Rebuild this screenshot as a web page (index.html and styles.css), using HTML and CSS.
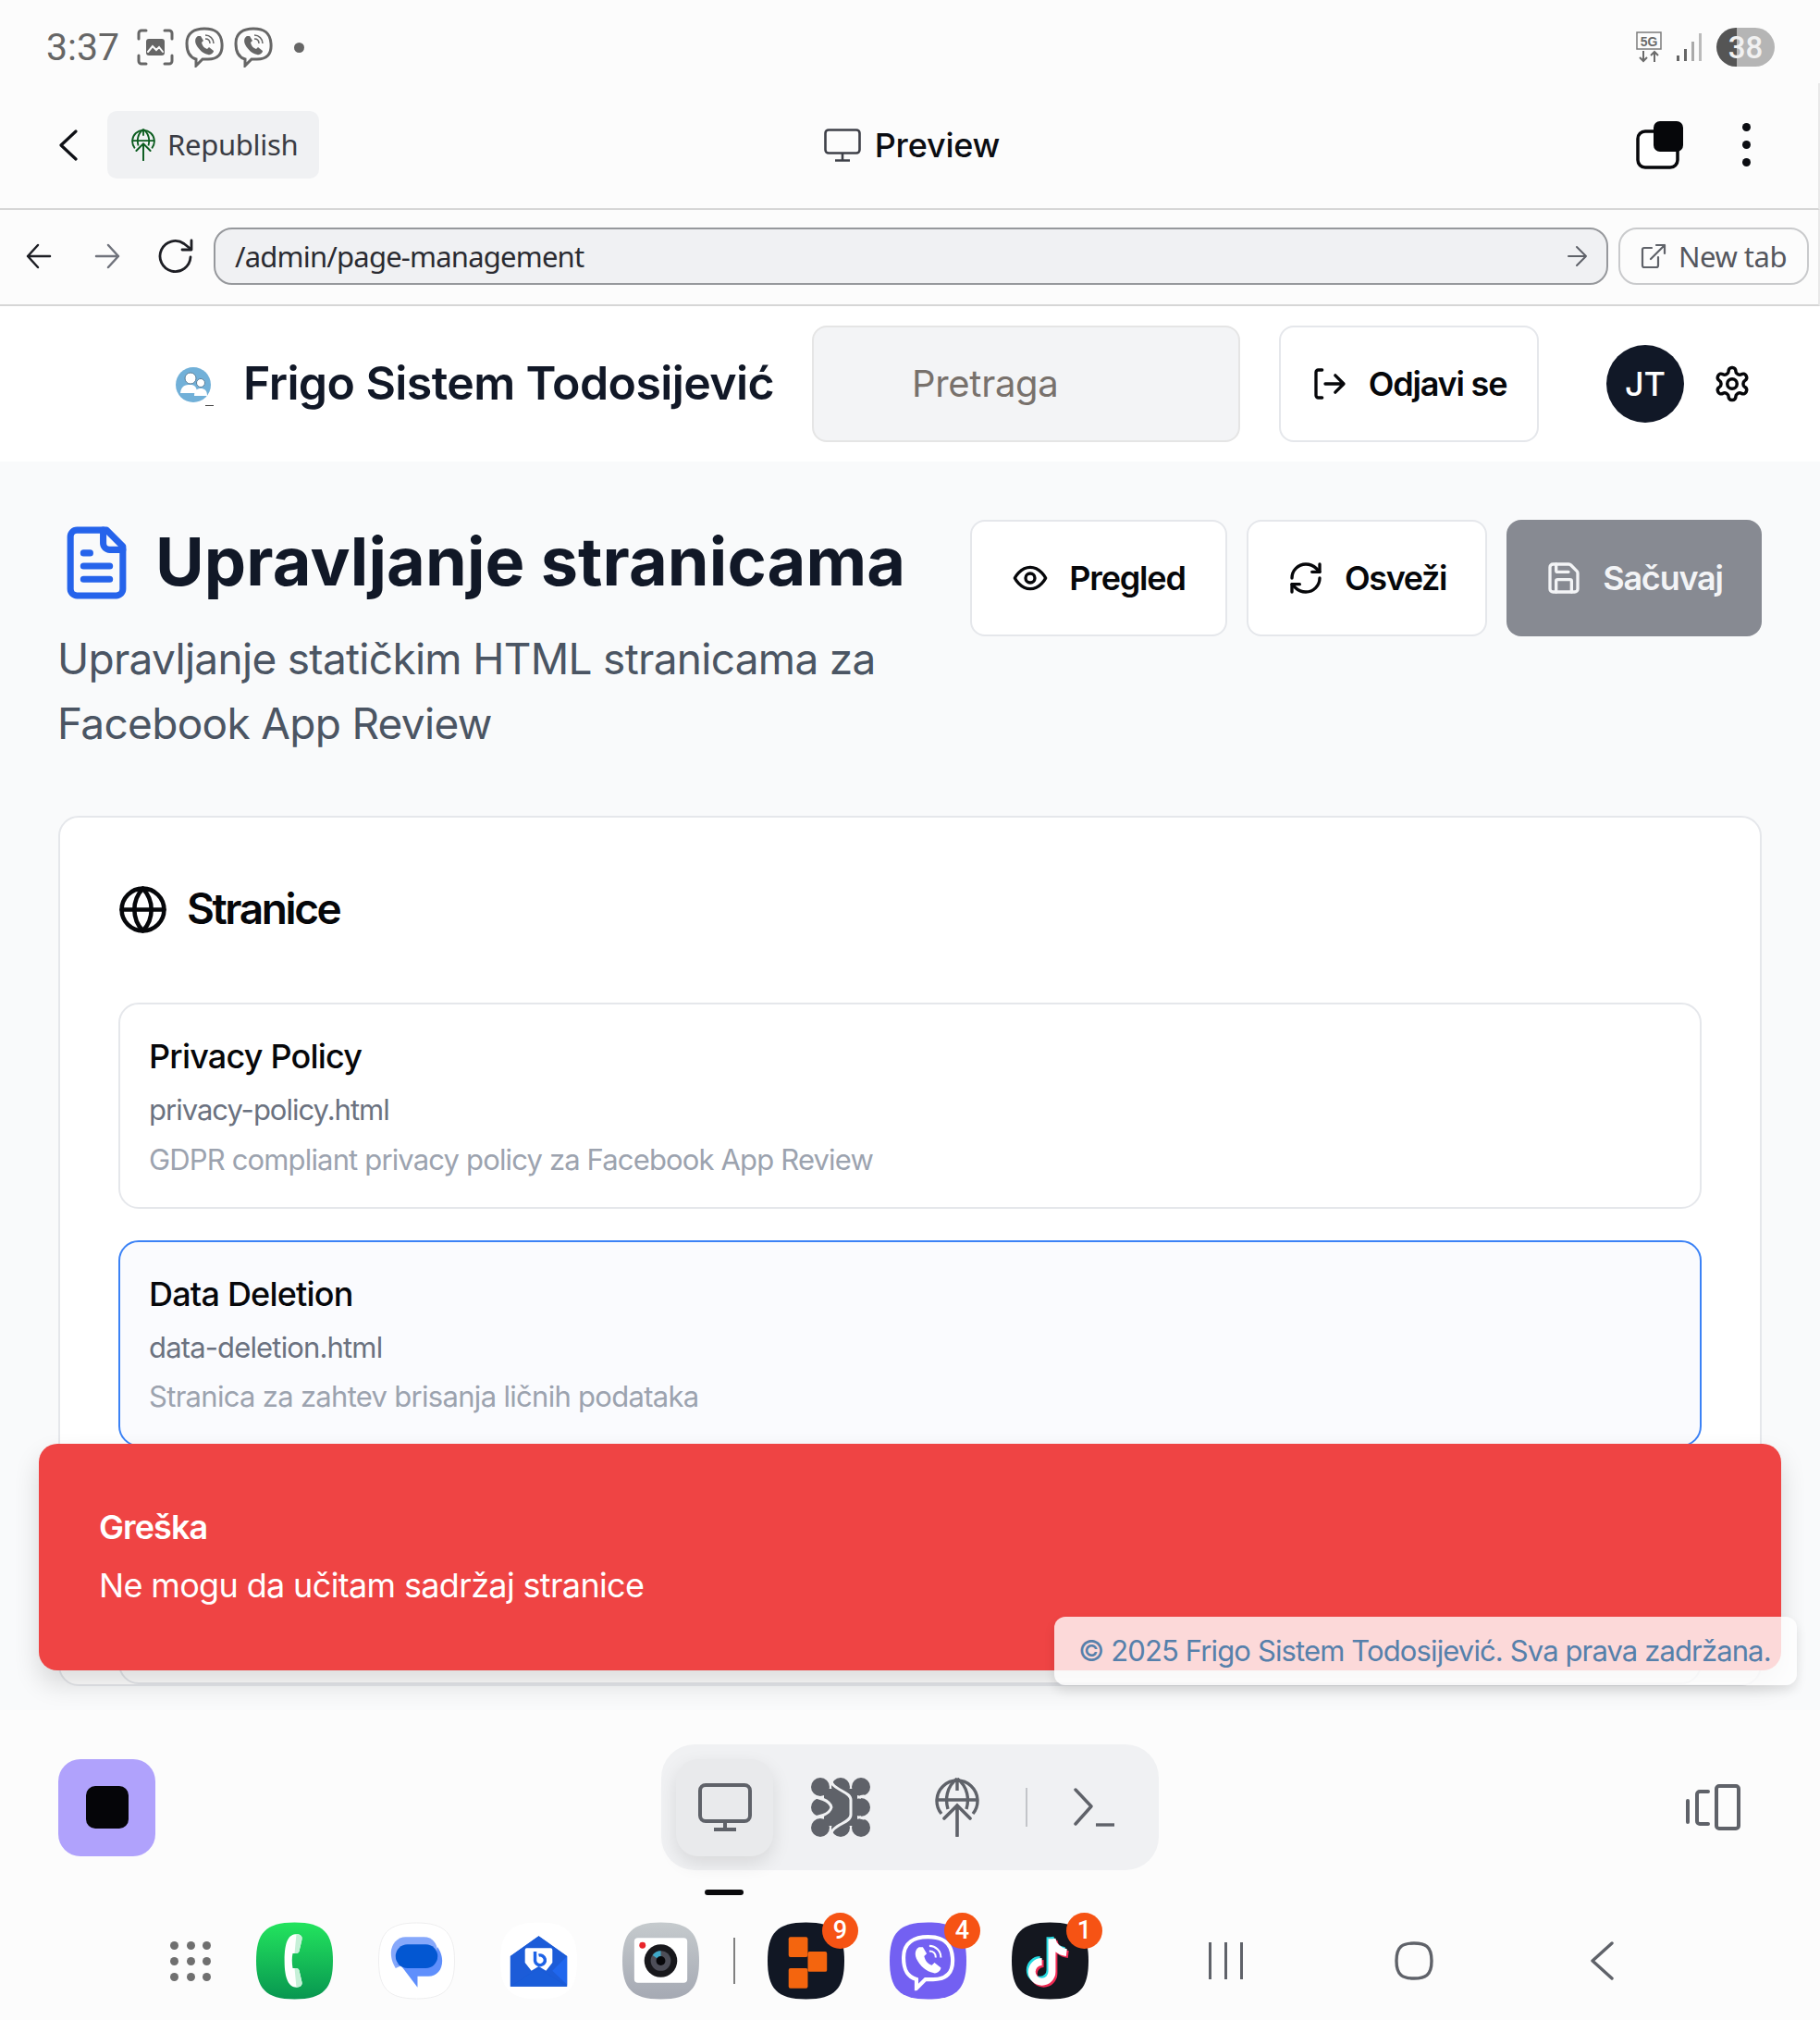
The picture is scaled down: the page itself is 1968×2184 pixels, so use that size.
FILE: index.html
```html
<!DOCTYPE html>
<html lang="sr">
<head>
<meta charset="utf-8">
<title>Upravljanje stranicama</title>
<link rel="stylesheet" href="styles.css">
</head>
<body>
<svg class="defs" width="0" height="0" aria-hidden="true">
  <symbol id="viber" viewBox="0 0 44 44">
    <path d="M22 2C32 2 40 5 41 18C42 30 36 35 26 35H20L13 42V35C6 33 3 28 3 18C3 6 12 2 22 2Z" fill="none" stroke="currentColor" stroke-width="3"/>
    <path d="M15 10C13 11 11 14 13 19C16 25 21 29 26 30C29 31 32 28 32 26L27 22L25 24C22 23 20 21 19 17L21 15L18 10Z" fill="currentColor"/>
    <path d="M23 9C28 9 32 13 32 18M23 13C26 13 28 15 28 18" fill="none" stroke="currentColor" stroke-width="1.5"/>
  </symbol>
  <symbol id="globeup" viewBox="0 0 48 64">
    <path d="M7 39A22 22 0 1 1 41 39" fill="none" stroke="currentColor" stroke-width="3.4"/>
    <path d="M24 1C12 10 11 24 14 34M24 1C36 10 37 24 34 34M2 24H46M24 1V14" fill="none" stroke="currentColor" stroke-width="3.4"/>
    <path d="M24 63V30M10 44L24 30L38 44" fill="none" stroke="currentColor" stroke-width="3.6" stroke-linecap="round"/>
  </symbol>
</svg>

<div class="app">
  <div class="status">
    <div class="status-left">
      <span class="clock">3:37</span>
      <svg class="st-shot" viewBox="0 0 40 40" fill="none" stroke="currentColor" stroke-width="3" stroke-linecap="round"><path d="M2 11V5a3 3 0 0 1 3-3h5M30 2h5a3 3 0 0 1 3 3v6M38 29v6a3 3 0 0 1-3 3h-5M10 38H5a3 3 0 0 1-3-3v-6"/><rect x="10" y="11" width="20" height="18" rx="3" fill="currentColor" stroke="none"/><path d="M12 25l5-6 4 4 3-3 4 5" stroke="#fcfcfc" stroke-width="2"/></svg>
      <svg class="st-viber"><use href="#viber"/></svg>
      <svg class="st-viber st-viber-2"><use href="#viber"/></svg>
      <span class="st-dot"></span>
    </div>
    <div class="status-right">
      <svg class="st-5g" viewBox="0 0 28 34"><rect x="1" y="1" width="26" height="18" fill="none" stroke="#7b7b7b" stroke-width="1.5"/><text x="14" y="15.500" text-anchor="middle" class="st-5g-text">5G</text><path d="M8 21V32M4 28l4 4 4-4M20 33V22M16 26l4-4 4 4" fill="none" stroke="#6b6b6b" stroke-width="2"/></svg>
      <svg class="st-signal" viewBox="0 0 28 30"><rect x="0" y="24" width="3" height="6" fill="#666"/><rect x="8" y="17" width="3" height="13" fill="#666"/><rect x="16" y="9" width="3" height="21" fill="#aaa"/><rect x="24" y="0" width="3" height="30" fill="#bbb"/></svg>
      <div class="battery"><span class="battery-num">38</span></div>
    </div>
  </div>

  <div class="topbar">
    <div class="top-left">
      <svg class="ic-back" viewBox="0 0 22 34" fill="none" stroke="#0e1015" stroke-width="3.200" stroke-linecap="round" stroke-linejoin="round"><path d="M19 2L3 17L19 32"/></svg>
      <button class="republish">
        <svg class="ic-rep" style="color:#0b5c1f"><use href="#globeup"/></svg>
        <span>Republish</span>
      </button>
    </div>
    <div class="top-center">
      <svg class="ic-mon" viewBox="0 0 40 36" fill="none" stroke="#3e4048" stroke-width="2.600"><rect x="1.500" y="1.500" width="37" height="25" rx="3.500"/><path d="M20 27V34M12 34.500H28"/></svg>
      <span class="preview">Preview</span>
    </div>
    <div class="top-right">
      <svg class="ic-tabs" viewBox="0 0 52 52"><rect x="2" y="11" width="43" height="39" rx="8" fill="#fff" stroke="#06070a" stroke-width="3.500"/><rect x="19" y="0" width="32" height="33" rx="7" fill="#06070a"/></svg>
      <div class="dots3"><i></i><i></i><i></i></div>
    </div>
  </div>

  <div class="urlrow">
    <svg class="nav-a" viewBox="0 0 28 28" fill="none" stroke="#1d1e24" stroke-width="2.500" stroke-linecap="round" stroke-linejoin="round"><path d="M26 14H2M13 2L2 14L13 26"/></svg>
    <svg class="nav-b" viewBox="0 0 28 28" fill="none" stroke="#70737c" stroke-width="2.500" stroke-linecap="round" stroke-linejoin="round"><path d="M2 14H26M15 2L26 14L15 26"/></svg>
    <svg class="nav-r" viewBox="0 0 38 38" fill="none" stroke="#1d1e24" stroke-width="2.800" stroke-linecap="round" stroke-linejoin="round"><path d="M35 20A16.500 16.500 0 1 1 28 5.500L35 11"/><path d="M36 2V12H26"/></svg>
    <div class="urlbox">
      <span class="urltext">/admin/page-management</span>
      <svg class="url-go" viewBox="0 0 22 28" fill="none" stroke="#5f6269" stroke-width="2" stroke-linecap="round" stroke-linejoin="round"><path d="M1 14H20M10 4L20 14L10 24"/></svg>
    </div>
    <button class="newtab">
      <svg class="ic-ext" viewBox="0 0 28 28" fill="none" stroke="#5f6269" stroke-width="2.200" stroke-linecap="round" stroke-linejoin="round"><path d="M12 5H4a2 2 0 0 0-2 2v17a2 2 0 0 0 2 2h13a2 2 0 0 0 2-2v-9M11 17L26 2M17 2h9v9"/></svg>
      <span>New tab</span>
    </button>
  </div>

  <header class="apphead">
    <svg class="logo" viewBox="0 0 56 44">
      <circle cx="19" cy="20" r="19" fill="#71b0d8"/>
      <circle cx="16" cy="13" r="6" fill="#fff" stroke="#5d7f98" stroke-width="1"/>
      <circle cx="27" cy="18" r="4.500" fill="#fff" stroke="#5d7f98" stroke-width="1"/>
      <path d="M5 29C6 21 10 20 16 20C20 20 23 22 23 29Z" fill="#fff"/>
      <path d="M20 32C20 26 23 24 27 24C31 24 34 26 34 32Z" fill="#fff"/>
      <rect x="32" y="42" width="9" height="1" fill="#444"/>
    </svg>
    <h2 class="brand">Frigo Sistem Todosijević</h2>
    <div class="search">Pretraga</div>
    <button class="btn btn-logout">
      <svg class="ic-btn" viewBox="0 0 24 24" fill="none" stroke="#06070a" stroke-width="2" stroke-linecap="round" stroke-linejoin="round"><path d="M7 3H4.500A1.500 1.500 0 0 0 3 4.500v15A1.500 1.500 0 0 0 4.500 21H7"/><path d="M9 12h12M15.500 6.500L21 12l-5.500 5.500"/></svg>
      <span>Odjavi se</span>
    </button>
    <div class="avatar">JT</div>
    <svg class="gear" viewBox="0 0 24 24" fill="none" stroke="#06070a" stroke-width="2" stroke-linecap="round" stroke-linejoin="round"><path d="M12.220 2h-.44a2 2 0 0 0-2 2v.18a2 2 0 0 1-1 1.730l-.43.25a2 2 0 0 1-2 0l-.15-.08a2 2 0 0 0-2.730.73l-.22.38a2 2 0 0 0 .73 2.730l.15.1a2 2 0 0 1 1 1.720v.51a2 2 0 0 1-1 1.740l-.15.09a2 2 0 0 0-.73 2.730l.22.38a2 2 0 0 0 2.730.73l.15-.08a2 2 0 0 1 2 0l.43.25a2 2 0 0 1 1 1.730V20a2 2 0 0 0 2 2h.44a2 2 0 0 0 2-2v-.18a2 2 0 0 1 1-1.730l.43-.25a2 2 0 0 1 2 0l.15.08a2 2 0 0 0 2.730-.73l.22-.39a2 2 0 0 0-.73-2.730l-.15-.08a2 2 0 0 1-1-1.740v-.5a2 2 0 0 1 1-1.740l.15-.09a2 2 0 0 0 .73-2.730l-.22-.38a2 2 0 0 0-2.730-.73l-.15.08a2 2 0 0 1-2 0l-.43-.25a2 2 0 0 1-1-1.730V4a2 2 0 0 0-2-2z"/><circle cx="12" cy="12" r="3"/></svg>
  </header>

  <main class="page">
    <section class="pagehead">
      <div class="pagehead-text">
        <div class="title-row">
          <svg class="ic-doc" viewBox="0 0 24 24" fill="none" stroke="#2563eb" stroke-width="2" stroke-linecap="round" stroke-linejoin="round"><path d="M15 2H6a2 2 0 0 0-2 2v16a2 2 0 0 0 2 2h12a2 2 0 0 0 2-2V7Z"/><path d="M14 2v4a2 2 0 0 0 2 2h4"/><path d="M10 9H8M16 13H8M16 17H8"/></svg>
          <h1>Upravljanje stranicama</h1>
        </div>
        <p class="subtitle">Upravljanje statičkim HTML stranicama za Facebook App Review</p>
      </div>
      <div class="actions">
        <button class="btn btn-pregled">
          <svg class="ic-btn" viewBox="0 0 24 24" fill="none" stroke="#06070a" stroke-width="2" stroke-linecap="round" stroke-linejoin="round"><path d="M2 12s3.500-7 10-7 10 7 10 7-3.500 7-10 7-10-7-10-7Z"/><circle cx="12" cy="12" r="3"/></svg>
          <span>Pregled</span>
        </button>
        <button class="btn btn-osvezi">
          <svg class="ic-btn" viewBox="0 0 24 24" fill="none" stroke="#06070a" stroke-width="2" stroke-linecap="round" stroke-linejoin="round"><path d="M3 12a9 9 0 0 1 9-9 9.750 9.750 0 0 1 6.740 2.740L21 8"/><path d="M21 3v5h-5"/><path d="M21 12a9 9 0 0 1-9 9 9.750 9.750 0 0 1-6.740-2.740L3 16"/><path d="M8 16H3v5"/></svg>
          <span>Osveži</span>
        </button>
        <button class="btn btn-save">
          <svg class="ic-btn" viewBox="0 0 24 24" fill="none" stroke="#f3f4f6" stroke-width="2" stroke-linecap="round" stroke-linejoin="round"><path d="M15.200 3a2 2 0 0 1 1.400.6l3.800 3.800a2 2 0 0 1 .6 1.400V19a2 2 0 0 1-2 2H5a2 2 0 0 1-2-2V5a2 2 0 0 1 2-2z"/><path d="M17 21v-7a1 1 0 0 0-1-1H8a1 1 0 0 0-1 1v7"/><path d="M7 3v4a1 1 0 0 0 1 1h7"/></svg>
          <span>Sačuvaj</span>
        </button>
      </div>
    </section>

    <section class="card">
      <div class="card-title">
        <svg class="ic-globe" viewBox="0 0 24 24" fill="none" stroke="#06070a" stroke-width="2" stroke-linecap="round" stroke-linejoin="round"><circle cx="12" cy="12" r="10"/><path d="M12 2a14.500 14.500 0 0 0 0 20 14.500 14.500 0 0 0 0-20"/><path d="M2 12h20"/></svg>
        <h3>Stranice</h3>
      </div>
      <div class="items">
        <article class="item">
          <div class="item-name">Privacy Policy</div>
          <div class="item-file">privacy-policy.html</div>
          <div class="item-desc">GDPR compliant privacy policy za Facebook App Review</div>
        </article>
        <article class="item item-active">
          <div class="item-name">Data Deletion</div>
          <div class="item-file">data-deletion.html</div>
          <div class="item-desc">Stranica za zahtev brisanja ličnih podataka</div>
        </article>
        <article class="item">
          <div class="item-name">&nbsp;</div>
          <div class="item-file">&nbsp;</div>
          <div class="item-desc">&nbsp;</div>
        </article>
      </div>
    </section>
  </main>

  <div class="toast">
    <div class="toast-title">Greška</div>
    <div class="toast-msg">Ne mogu da učitam sadržaj stranice</div>
  </div>
  <div class="copyright">© 2025 Frigo Sistem Todosijević. Sva prava zadržana.</div>

  <div class="bottom">
    <div class="tools">
      <div class="stop"><span class="stop-sq"></span></div>
      <div class="dock">
        <div class="dock-tab">
          <svg class="dk-mon" viewBox="0 0 58 52" fill="none" stroke="#5f6269" stroke-width="4"><rect x="2" y="2" width="54" height="39" rx="6"/><path d="M29 41V50M17 50H41"/></svg>
        </div>
        <svg class="dk-mol" viewBox="0 0 64 64">
          <g fill="#5f6269"><ellipse cx="10" cy="10" rx="10" ry="10"/><ellipse cx="32" cy="10" rx="10" ry="10"/><ellipse cx="54" cy="10" rx="10" ry="10"/><ellipse cx="10" cy="32" rx="10" ry="10"/><ellipse cx="32" cy="32" rx="14" ry="14"/><ellipse cx="54" cy="32" rx="10" ry="10"/><ellipse cx="10" cy="54" rx="10" ry="10"/><ellipse cx="32" cy="54" rx="10" ry="10"/><ellipse cx="54" cy="54" rx="10" ry="10"/><rect x="14" y="12" width="36" height="40"/></g>
          <path d="M21 0C21 14 43 14 43 24V40C43 50 21 50 21 64M0 21C8 21 20 24 22 32C20 40 8 43 0 43M64 21C58 21 56 18 52 22M64 43C58 43 56 46 52 42" fill="none" stroke="#f0f1f3" stroke-width="3"/>
        </svg>
        <svg class="dk-glob" style="color:#5f6269"><use href="#globeup"/></svg>
        <span class="dk-sep"></span>
        <svg class="dk-term" viewBox="0 0 46 42" fill="none" stroke="#5f6269" stroke-width="3.400" stroke-linecap="round" stroke-linejoin="round"><path d="M2 2L19 20L2 39"/><path d="M24 40H44" stroke-linecap="butt"/></svg>
      </div>
      <svg class="split" viewBox="0 0 59 50" fill="none" stroke="#5f6269" stroke-width="4" stroke-linecap="round" stroke-linejoin="round"><path d="M2 18V41"/><path d="M24 8H15a3 3 0 0 0-3 3v29a3 3 0 0 0 3 3h9"/><rect x="33" y="2" width="24" height="46" rx="3"/></svg>
    </div>
    <span class="indicator"></span>
    <nav class="navrow">
      <div class="appsgrid"><i></i><i></i><i></i><i></i><i></i><i></i><i></i><i></i><i></i></div>
      <svg class="appic" viewBox="0 0 84 84">
        <defs><linearGradient id="gr" x1="0" y1="0" x2="0" y2="1"><stop offset="0" stop-color="#23e45e"/><stop offset="1" stop-color="#089650"/></linearGradient></defs>
        <path class="sq" d="M42 0C74 0 84 12 84 42C84 72 74 84 42 84C10 84 0 72 0 42C0 12 10 0 42 0Z" fill="url(#gr)"/>
        <path d="M44 13C36 13 31 20 31 42C31 62 36 71 44 71C48 71 51 69 50 65L47 52C46 50 44 50 40 50C39 44 39 38 40 34C44 34 46 34 47 32L50 19C51 15 48 13 44 13Z" fill="#fff"/>
        <path d="M44 13C48 13 51 15 50 19L47 32C46 34 44 34 42 34ZM42 50C44 50 46 50 47 52L50 65C51 69 48 71 44 71Z" fill="#c6f0d8"/>
      </svg>
      <svg class="appic" viewBox="0 0 84 84">
        <path d="M42 .5C73 .5 83.500 12 83.500 42C83.500 72 73 83.500 42 83.500C11 83.500 .5 72 .5 42C.5 12 11 .5 42 .5Z" fill="#fff" stroke="#eeeeef"/>
        <path d="M30 16H50C60 16 64 24 65 30L19 50C15 44 14 38 14 33C14 24 21 16 30 16Z" fill="#86a8fb"/>
        <path d="M19 45C25 51 60 50 65 27C69 33 70 38 70 42C70 52 64 59 55 59H43V71L24 46Z" fill="#5f8ffc"/>
        <rect x="19" y="24" width="46" height="26" rx="13" fill="#0357d2"/>
      </svg>
      <svg class="appic" viewBox="0 0 84 84">
        <path d="M42 0C74 0 84 12 84 42C84 72 74 84 42 84C10 84 0 72 0 42C0 12 10 0 42 0Z" fill="#fff"/>
        <path d="M42 15L73 37V70H11V37Z" fill="#1756cf"/>
        <path d="M11 37L42 15L73 37V70L42 50L11 70Z" fill="#1c5cd8"/>
        <path d="M73 37V68L57 53Z" fill="#2067ee"/>
        <path d="M11 70L42 50L73 70Z" fill="#1a5dd9"/>
        <path d="M27 30a2 2 0 0 1 2-2H55a2 2 0 0 1 2 2V44L50 53L42 48L34 53L27 44Z" fill="#fff"/>
        <path d="M38 32V42A5.500 5.500 0 1 0 42 36" fill="none" stroke="#1d62e6" stroke-width="3.500"/>
      </svg>
      <svg class="appic" viewBox="0 0 84 84">
        <defs><linearGradient id="gc" x1="0" y1="0" x2="0" y2="1"><stop offset="0" stop-color="#c5cacd"/><stop offset="1" stop-color="#a5a9b3"/></linearGradient></defs>
        <path d="M42 0C74 0 84 12 84 42C84 72 74 84 42 84C10 84 0 72 0 42C0 12 10 0 42 0Z" fill="url(#gc)"/>
        <rect x="13" y="17" width="58" height="49" rx="4" fill="#fff"/>
        <circle cx="42" cy="42" r="18" fill="#18181c"/>
        <circle cx="42" cy="42" r="11" fill="#4d4e58"/>
        <path d="M42 31A11 11 0 0 0 33 36L42 42Z" fill="#3fa9c8"/>
        <circle cx="42" cy="42" r="5" fill="#07070a"/>
        <circle cx="22" cy="25" r="3.500" fill="#e9262c"/>
      </svg>
      <span class="nav-sep"></span>
      <div class="badged">
        <svg class="appic" viewBox="0 0 84 84">
          <path d="M42 0C74 0 84 12 84 42C84 72 74 84 42 84C10 84 0 72 0 42C0 12 10 0 42 0Z" fill="#111724"/>
          <g fill="#f4650e"><rect x="23" y="16" width="21" height="22" rx="2"/><rect x="44" y="32" width="21" height="22" rx="2"/><rect x="23" y="50" width="21" height="22" rx="2"/></g>
        </svg>
        <span class="badge">9</span>
      </div>
      <div class="badged">
        <svg class="appic" viewBox="0 0 84 84">
          <path d="M42 0C74 0 84 12 84 42C84 72 74 84 42 84C10 84 0 72 0 42C0 12 10 0 42 0Z" fill="#7360f2"/>
          <g style="color:#fff"><svg x="11" y="13" width="62" height="62"><use href="#viber"/></svg></g>
        </svg>
        <span class="badge">4</span>
      </div>
      <div class="badged">
        <svg class="appic" viewBox="0 0 84 84">
          <path d="M42 0C74 0 84 12 84 42C84 72 74 84 42 84C10 84 0 72 0 42C0 12 10 0 42 0Z" fill="#14171f"/>
          <path d="M44 18V54A11 11 0 1 1 33 43M44 18C45 26 52 32 60 33" fill="none" stroke="#25d9e0" stroke-width="8" transform="translate(-2 -2)"/>
          <path d="M44 18V54A11 11 0 1 1 33 43M44 18C45 26 52 32 60 33" fill="none" stroke="#f02c55" stroke-width="8" transform="translate(2 2)"/>
          <path d="M44 18V54A11 11 0 1 1 33 43M44 18C45 26 52 32 60 33" fill="none" stroke="#fff" stroke-width="8"/>
        </svg>
        <span class="badge">1</span>
      </div>
      <div class="recents"><i></i><i></i><i></i></div>
      <svg class="home" viewBox="0 0 42 42" fill="none" stroke="#5f6269" stroke-width="3.400"><path d="M21 2C33 2 40 5 40 21C40 37 33 40 21 40C9 40 2 37 2 21C2 5 9 2 21 2Z"/></svg>
      <svg class="backnav" viewBox="0 0 26 42" fill="none" stroke="#5f6269" stroke-width="3.400" stroke-linecap="round" stroke-linejoin="round"><path d="M24 2L3 21L24 40"/></svg>
    </nav>
  </div>
</div>
</body>
</html>
```

FILE: styles.css
```css
* { box-sizing: border-box; }
html, body { margin: 0; padding: 0; background: #fcfcfc; }
body { font-family: Inter, "Noto Sans", Roboto, sans-serif; color: #0b0d12; }
.defs { position: absolute; }
button { font: inherit; color: inherit; cursor: pointer; }
.app { position: relative; width: 1968px; height: 2184px; overflow: hidden; display: flex; flex-direction: column; background: #fcfcfc; }

/* status bar */
.status { height: 90px; flex: none; display: flex; justify-content: space-between; align-items: center; padding: 12px 49px 0 50px; color: #666; }
.status-left { display: flex; align-items: center; }
.clock { font: 400 41px/1 Roboto, sans-serif; color: #666; width: 98px; }
.st-shot { width: 40px; height: 40px; color: #666; }
.st-viber { width: 44px; height: 44px; margin-left: 11px; color: #666; }
.st-viber-2 { margin-left: 9px; }
.st-dot { width: 11px; height: 11px; border-radius: 50%; background: #666; margin-left: 22px; }
.status-right { display: flex; align-items: center; }
.st-5g { width: 28px; height: 34px; }
.st-5g-text { font: 700 14px "Liberation Sans", sans-serif; fill: #6b6b6b; }
.st-signal { width: 28px; height: 30px; margin-left: 16px; }
.battery { width: 63px; height: 42px; margin-left: 15px; border-radius: 21px; background: linear-gradient(90deg, #555 0 35%, #b5b5b5 35% 100%); display: flex; align-items: center; justify-content: center; }
.battery-num { font: 500 33px/1 Roboto, sans-serif; color: #f1f1f1; }

/* top bar */
.topbar { height: 137px; flex: none; display: grid; grid-template-columns: 1fr auto 1fr; align-items: center; padding: 0 73px 2px 63px; border-bottom: 2px solid #d6d6d6; border-right: 2px solid #e9e9e9; }
.top-left { display: flex; align-items: center; }
.ic-back { width: 22px; height: 34px; }
.republish { margin-left: 31px; width: 229px; height: 73px; border: 0; border-radius: 10px; background: #f0f1f3; display: flex; align-items: center; padding: 0 0 0 26px; gap: 13px; font: 400 31px/1 "Noto Sans", sans-serif; letter-spacing: -.3px; color: #3a3c44; }
.ic-rep { width: 26px; height: 35px; }
.top-center { display: flex; align-items: center; gap: 15px; margin-left: 16px; }
.ic-mon { width: 40px; height: 36px; }
.preview { font: 500 36px/1 Inter, sans-serif; color: #0b0d12; letter-spacing: -.2px; }
.top-right { display: flex; align-items: center; justify-content: flex-end; gap: 63px; }
.ic-tabs { width: 52px; height: 52px; }
.dots3 { display: flex; flex-direction: column; gap: 10px; }
.dots3 i { width: 9px; height: 9px; border-radius: 50%; background: #0b0d12; display: block; }

/* url row */
.urlrow { height: 104px; flex: none; display: flex; align-items: center; padding: 0 0 2px 28px; border-bottom: 2px solid #d6d6d6; border-right: 2px solid #e9e9e9; }
.urlrow > * { flex: none; }
.nav-a, .nav-b { width: 28px; height: 28px; }
.nav-b { margin-left: 46px; }
.nav-r { width: 38px; height: 38px; margin-left: 41px; }
.urlbox { margin-left: 22px; width: 1508px; height: 62px; border: 2px solid #96989c; border-radius: 20px; background: #f0f1f3; display: flex; align-items: center; justify-content: space-between; padding: 0 20px 0 21px; }
.urltext { font: 400 31px/1 "Noto Sans", sans-serif; letter-spacing: -.8px; color: #2a2b31; }
.url-go { width: 22px; height: 28px; }
.newtab { margin-left: 11px; width: 206px; height: 62px; border: 2px solid #c9cacc; border-radius: 20px; background: #fcfcfc; display: flex; align-items: center; padding: 0 0 0 22px; gap: 13px; font: 400 31px/1 "Noto Sans", sans-serif; letter-spacing: -.5px; color: #55575e; }
.ic-ext { width: 28px; height: 28px; }

/* app header */
.apphead { height: 168px; flex: none; display: flex; align-items: center; padding: 0 0 0 190px; background: #fff; }
.logo { width: 56px; height: 44px; margin-top: 6px; }
.brand { margin: -2px 0 0 17px; width: 559px; font: 600 50px/1 Inter, sans-serif; letter-spacing: -.6px; color: #111827; white-space: nowrap; }
.search { margin-left: 56px; width: 463px; height: 126px; background: #f3f4f6; border: 2px solid #e5e5e5; border-radius: 16px; display: flex; align-items: center; padding-left: 106px; font: 400 40px/1 Inter, sans-serif; letter-spacing: -.3px; color: #78716c; }
.btn { height: 126px; border-radius: 16px; border: 2px solid #e5e7eb; background: #fff; display: flex; align-items: center; justify-content: center; font: 600 36px/1 Inter, sans-serif; letter-spacing: -1.2px; color: #06070a; gap: 22px; padding: 0; }
.ic-btn { width: 40px; height: 40px; flex: none; }
.btn-logout { margin-left: 42px; width: 281px; }
.avatar { margin-left: 73px; width: 84px; height: 84px; border-radius: 50%; background: #111827; color: #fff; display: flex; align-items: center; justify-content: center; font: 500 36px/1 Inter, sans-serif; }
.gear { width: 42px; height: 42px; margin-left: 31px; }

/* page */
.page { height: 1350px; flex: none; overflow: hidden; background: #f9fafb; padding: 63px 63px 0; }
.pagehead { display: flex; justify-content: space-between; align-items: flex-start; height: 320px; }
.pagehead-text { width: 960px; }
.title-row { display: flex; align-items: center; height: 90px; margin-left: -1px; }
.ic-doc { width: 85px; height: 85px; flex: none; margin-top: 3px; }
h1 { margin: 0 0 0 21px; font: 700 72px/1 Inter, sans-serif; letter-spacing: .1px; color: #111827; white-space: nowrap; }
.subtitle { margin: 25px 0 0 -1px; font: 400 46px/70px Inter, sans-serif; letter-spacing: -.7px; color: #4b5563; }
.actions { display: flex; gap: 21px; margin-right: 0; }
.btn-pregled { width: 278px; }
.btn-osvezi { width: 260px; letter-spacing: -1.4px; }
.btn-save { width: 276px; background: #878a92; border: 0; color: #f3f4f6; }

.card { background: #fff; border: 2px solid #e5e7eb; border-radius: 22px; padding: 63px 63px 0; }
.card-title { display: flex; align-items: center; gap: 20px; height: 74px; }
.ic-globe { width: 55px; height: 55px; margin-left: -1px; margin-top: -1px; }
h3 { margin: -5px 0 0; font: 600 46px/1 Inter, sans-serif; letter-spacing: -2.4px; color: #06070a; }
.items { margin-top: 63px; display: flex; flex-direction: column; gap: 34px; }
.item { height: 223px; border: 2px solid #e5e7eb; border-radius: 22px; padding: 32px 32px 0 31px; background: #fff; }
.item-active { border-color: #3b82f6; background: #fafbfe; }
.item-name { font: 500 36px/48px Inter, sans-serif; letter-spacing: -.8px; color: #06070a; }
.item-file { margin-top: 12px; font: 400 31px/44px Inter, sans-serif; letter-spacing: -1px; color: #6b7280; }
.item-desc { margin-top: 10px; font: 400 31px/44px Inter, sans-serif; letter-spacing: -.85px; color: #9ca3af; }
.item-active .item-file { letter-spacing: -.85px; }
.item-active .item-desc { margin-top: 9px; letter-spacing: -.7px; }

/* overlays */
.toast { position: absolute; left: 42px; top: 1561px; width: 1884px; height: 245px; background: #ef4444; border-radius: 20px; padding: 66px 65px 0; color: #fff; box-shadow: 0 14px 28px rgba(0,0,0,.14); }
.toast-title { font: 600 36px/48px Inter, sans-serif; letter-spacing: -.9px; }
.toast-msg { margin-top: 15px; font: 400 36px/48px Inter, sans-serif; letter-spacing: -.65px; }
.copyright { position: absolute; left: 1140px; top: 1748px; width: 803px; height: 74px; border-radius: 12px; background: rgba(255,255,255,.8); box-shadow: 0 6px 12px rgba(0,0,0,.1); padding: 0 0 2px 26px; display: flex; align-items: center; font: 400 31px/1 Inter, sans-serif; letter-spacing: -.88px; color: #5680ab; white-space: nowrap; }

/* bottom */
.bottom { flex: 1; padding-top: 37px; display: flex; flex-direction: column; background: #fcfcfc; }
.tools { display: grid; grid-template-columns: 1fr auto 1fr; align-items: center; height: 136px; padding: 0 63px; }
.stop { width: 105px; height: 105px; border-radius: 24px; background: #b0a2fc; display: flex; align-items: center; justify-content: center; }
.stop-sq { width: 46px; height: 46px; border-radius: 10px; background: #050508; }
.dock { width: 538px; height: 136px; border-radius: 36px; background: #f0f1f3; display: flex; align-items: center; padding-left: 16px; }
.dock-tab { width: 105px; height: 105px; border-radius: 24px; background: #e9eaec; box-shadow: 0 8px 20px rgba(0,0,0,.1); display: flex; align-items: center; justify-content: center; }
.dk-mon { width: 58px; height: 52px; }
.dk-mol { width: 64px; height: 64px; margin-left: 41px; }
.dk-glob { width: 48px; height: 64px; margin-left: 70px; }
.dk-sep { width: 2px; height: 42px; background: #c3c5c9; margin-left: 50px; }
.dk-term { width: 46px; height: 42px; margin-left: 50px; }
.split { width: 59px; height: 50px; justify-self: end; margin-right: 23px; }
.indicator { display: block; width: 42px; height: 6px; border-radius: 3px; background: #0a0a0c; margin: 21px 0 0 762px; }
.navrow { display: flex; align-items: center; height: 84px; margin-top: 29px; padding-left: 184px; gap: 49px; }
.appsgrid { display: grid; grid-template-columns: repeat(3, 9px); gap: 8px 8px; justify-content: space-between; width: 44px; }
.appsgrid i { display: block; width: 9px; height: 9px; border-radius: 50%; background: #6f6f6f; }
.appic { width: 83px; height: 84px; display: block; }
.nav-sep { width: 2px; height: 50px; background: #808080; margin: 0 -14px 0 -12px; }
.badged { position: relative; width: 83px; height: 84px; }
.badge { position: absolute; left: 59px; top: -10px; width: 39px; height: 39px; border-radius: 50%; background: #f65314; color: #fff; display: flex; align-items: center; justify-content: center; font: 500 27px/1 Roboto, sans-serif; }
.recents { display: flex; gap: 14px; margin-left: 81px; }
.recents i { display: block; width: 3px; height: 40px; background: #5f6269; }
.home { width: 42px; height: 42px; margin-left: 115px; }
.backnav { width: 26px; height: 42px; margin-left: 120px; }
```
